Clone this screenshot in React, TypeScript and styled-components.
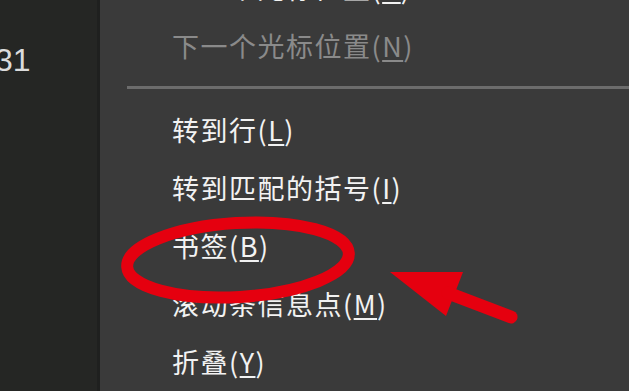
import React from "react";
import styled, { createGlobalStyle } from "styled-components";

const Global = createGlobalStyle`
  html, body { margin: 0; padding: 0; background: #393939; }
  body { width: 629px; height: 391px; overflow: hidden; }
`;

const Screen = styled.div`
  position: relative;
  width: 629px;
  height: 391px;
  display: flex;
  overflow: hidden;
  background: #393939;
  font-family: "Noto Sans CJK SC", "Microsoft YaHei", sans-serif;
`;

const Gutter = styled.div`
  width: 97px;
  flex: none;
  background: #252624;
  padding-top: 40px;
  box-sizing: border-box;
`;

const LineNumber = styled.div`
  margin-left: -5px;
  font-family: "Liberation Sans", "DejaVu Sans", sans-serif;
  font-size: 32px;
  line-height: 40px;
  color: #dcdcdc;
`;

const Edge = styled.div`
  width: 3px;
  flex: none;
  background: #1f201f;
`;

const Menu = styled.div`
  flex: 1;
  overflow: hidden;
  background: #3a3a3a;
`;

const MenuList = styled.div`
  margin-top: -42px;
  display: flex;
  flex-direction: column;
`;

const Item = styled.div<{ $disabled?: boolean }>`
  height: 58px;
  display: flex;
  align-items: center;
  padding-left: 72px;
  font-size: 27px;
  letter-spacing: 1.5px;
  color: ${(p) => (p.$disabled ? "#8a8a8a" : "#f2f2f2")};
  white-space: nowrap;
`;

const Key = styled.span`
  text-decoration: underline;
  text-decoration-thickness: 2px;
  text-underline-offset: 3px;
`;

const Separator = styled.div`
  height: 26px;
  display: flex;
  align-items: center;
  padding-left: 27px;
  &::after {
    content: "";
    flex: 1;
    height: 3px;
    background: #6c6c6c;
  }
`;

const Annotation = styled.svg`
  position: absolute;
  left: 0;
  top: 0;
  pointer-events: none;
`;

type Entry = { label: string; key: string; disabled?: boolean } | "sep";

const entries: Entry[] = [
  { label: "上一个光标位置", key: "P" },
  { label: "下一个光标位置", key: "N", disabled: true },
  "sep",
  { label: "转到行", key: "L" },
  { label: "转到匹配的括号", key: "I" },
  { label: "书签", key: "B" },
  { label: "滚动条信息点", key: "M" },
  { label: "折叠", key: "Y" },
];

export default function App() {
  return (
    <>
      <Global />
      <Screen>
        <Gutter>
          <LineNumber>31</LineNumber>
        </Gutter>
        <Edge />
        <Menu>
          <MenuList>
            {entries.map((e, i) =>
              e === "sep" ? (
                <Separator key={i} />
              ) : (
                <Item key={i} $disabled={e.disabled}>
                  {e.label}(<Key>{e.key}</Key>)
                </Item>
              )
            )}
          </MenuList>
        </Menu>
        <Annotation width="629" height="391" viewBox="0 0 629 391">
          <ellipse
            cx="238"
            cy="260"
            rx="111"
            ry="37"
            transform="rotate(-3.5 238 260)"
            fill="none"
            stroke="#e5000f"
            strokeWidth="12"
          />
          <polygon points="390,272 463,272 446,316" fill="#e5000f" />
          <line
            x1="448"
            y1="293"
            x2="511"
            y2="317"
            stroke="#e5000f"
            strokeWidth="13"
            strokeLinecap="round"
          />
        </Annotation>
      </Screen>
    </>
  );
}
